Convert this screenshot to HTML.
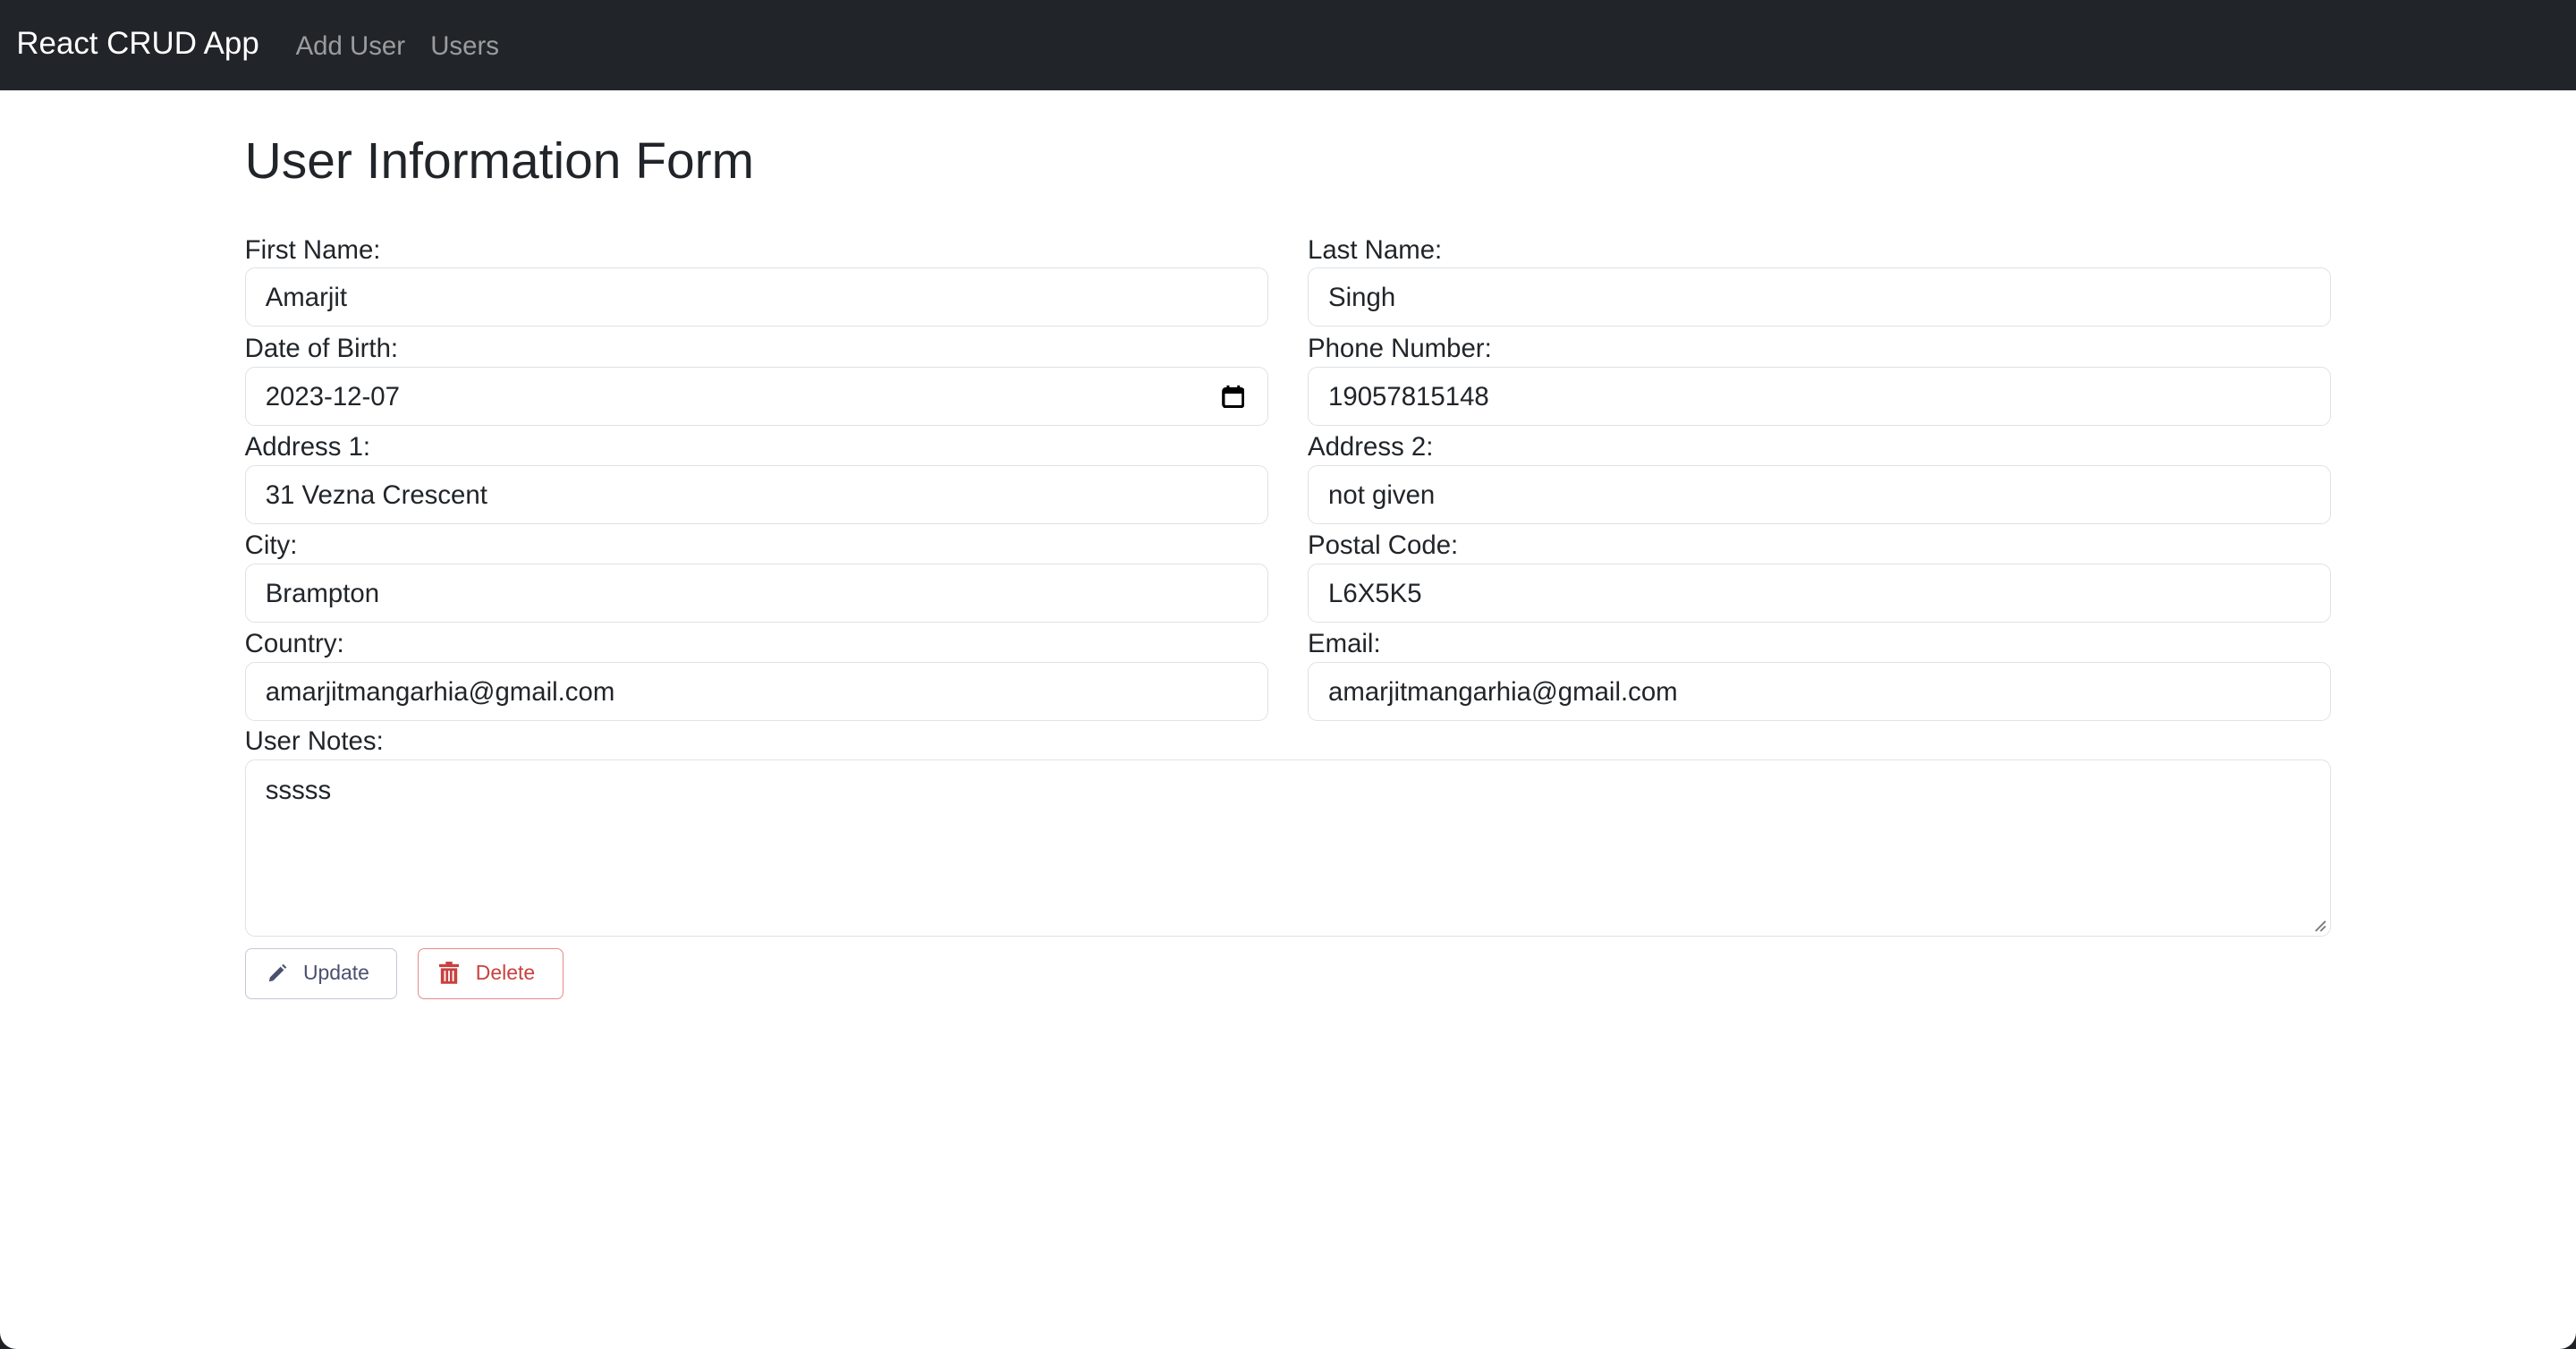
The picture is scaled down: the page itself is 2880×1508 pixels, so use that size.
<!DOCTYPE html>
<html><head><meta charset="utf-8"><style>
html,body{margin:0;padding:0;background:#1e2125;}
body{width:1568px;height:821px;zoom:1.8367;overflow:hidden;font-family:"Liberation Sans",sans-serif;color:#212529;}
.nav{height:55px;background:#212529;position:relative;}
.brand{position:absolute;left:10px;top:16px;font-size:19px;color:#fff;}
.link{position:absolute;top:19px;font-size:16px;color:rgba(255,255,255,.55);}
.main{position:absolute;top:55px;left:0;width:1568px;height:766px;background:#fff;border-radius:0 0 10px 10px;}
h1{position:absolute;left:149px;top:25px;margin:0;font-size:31px;font-weight:normal;}
.lbl{position:absolute;font-size:16px;}
.inp{position:absolute;border:1px solid #dee2e6;border-radius:6px;font-size:16px;line-height:36px;padding-left:12px;box-sizing:border-box;height:36px;}
.btn{position:absolute;top:522px;height:31px;border-radius:4px;box-sizing:border-box;font-size:12.5px;line-height:29px;}
</style></head><body>
<div class="nav"><div class="brand">React CRUD App</div><div class="link" style="left:180px">Add User</div><div class="link" style="left:262px">Users</div></div>
<div class="main">
<h1>User Information Form</h1>
<div class="lbl" style="left:149px;top:88px">First Name:</div>
<div class="lbl" style="left:796px;top:88px">Last Name:</div>
<div class="inp" style="left:149px;top:108px;width:623px">Amarjit</div>
<div class="inp" style="left:796px;top:108px;width:623px">Singh</div>
<div class="lbl" style="left:149px;top:148px">Date of Birth:</div>
<div class="lbl" style="left:796px;top:148px">Phone Number:</div>
<div class="inp" style="left:149px;top:168px;width:623px">2023-12-07
<svg style="position:absolute;right:14px;top:10px" width="14" height="15" viewBox="0 0 14 15"><rect x="1" y="3" width="12" height="11" rx="1.5" fill="none" stroke="#000" stroke-width="1.8"/><rect x="1" y="3" width="12" height="3" fill="#000"/><rect x="3" y="1" width="1.6" height="3" fill="#000"/><rect x="9.4" y="1" width="1.6" height="3" fill="#000"/></svg></div>
<div class="inp" style="left:796px;top:168px;width:623px">19057815148</div>
<div class="lbl" style="left:149px;top:208px">Address 1:</div>
<div class="lbl" style="left:796px;top:208px">Address 2:</div>
<div class="inp" style="left:149px;top:228px;width:623px">31 Vezna Crescent</div>
<div class="inp" style="left:796px;top:228px;width:623px">not given</div>
<div class="lbl" style="left:149px;top:268px">City:</div>
<div class="lbl" style="left:796px;top:268px">Postal Code:</div>
<div class="inp" style="left:149px;top:288px;width:623px">Brampton</div>
<div class="inp" style="left:796px;top:288px;width:623px">L6X5K5</div>
<div class="lbl" style="left:149px;top:328px">Country:</div>
<div class="lbl" style="left:796px;top:328px">Email:</div>
<div class="inp" style="left:149px;top:348px;width:623px">amarjitmangarhia@gmail.com</div>
<div class="inp" style="left:796px;top:348px;width:623px">amarjitmangarhia@gmail.com</div>
<div class="lbl" style="left:149px;top:387px">User Notes:</div>
<div class="inp" style="left:149px;top:407px;width:1270px;height:108px;line-height:22px;padding-top:8px">sssss
<svg style="position:absolute;right:2px;bottom:2px" width="8" height="8"><path d="M1 7L7 1M4 7L7 4" stroke="#777" stroke-width="1"/></svg></div>
<div class="btn" style="left:149px;width:93px;border:1px solid #c5c7da;color:#4a5070">
<svg style="position:absolute;left:13px;top:9px" width="12" height="12" viewBox="0 0 12 12"><path d="M1 11L1.5 8.5L8 2L10 4L3.5 10.5Z M8.8 1.2L9.6 .4L11.6 2.4L10.8 3.2Z" fill="#4a5070"/></svg>
<span style="position:absolute;left:35px">Update</span></div>
<div class="btn" style="left:254px;width:89px;border:1px solid #e58a8a;color:#c9413f">
<svg style="position:absolute;left:13px;top:8px" width="12" height="14" viewBox="0 0 12 14"><rect x="0" y="1.5" width="12" height="1.8" fill="#c9413f"/><rect x="4" y="0" width="4" height="2" fill="#c9413f"/><path d="M1 4H11V13.5H1Z" fill="#c9413f"/><path d="M3.5 5.5V12M6 5.5V12M8.5 5.5V12" stroke="#fff" stroke-width="1"/></svg>
<span style="position:absolute;left:35px">Delete</span></div>
</div>
</body></html>
